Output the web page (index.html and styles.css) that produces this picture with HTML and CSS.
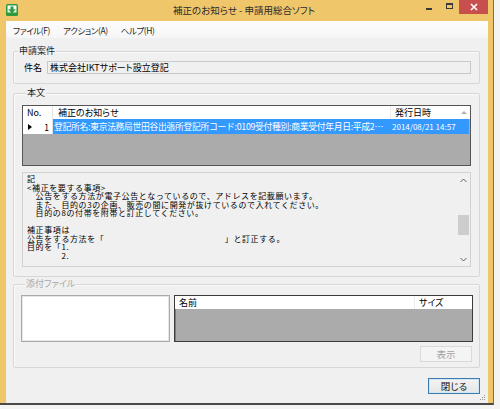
FILE: index.html
```html
<!DOCTYPE html>
<html lang="ja">
<head>
<meta charset="utf-8">
<title>補正のお知らせ</title>
<link rel="stylesheet" href="styles.css">
</head>
<body>
<div class="window">
  <div class="titlebar">
    <div class="tb-left">
      <svg class="appicon" width="12" height="12" viewBox="0 0 12 12">
        <rect x="0" y="0" width="12" height="12" rx="1.5" fill="#2f9a3c"/>
        <rect x="1.5" y="1.5" width="9" height="4" fill="#ffffff"/>
        <rect x="1.5" y="5.5" width="9" height="3" fill="#e8f4e8"/>
        <path d="M4.5 2.5 H7.5 V5.5 H9.5 L6 9.5 L2.5 5.5 H4.5 Z" fill="#2f9a3c"/>
      </svg>
    </div>
    <div class="title">補正のお知らせ - 申請用総合ソフト</div>
    <div class="controls">
      <div class="cbtn"><span class="min-glyph"></span></div>
      <div class="cbtn"><span class="max-glyph"></span></div>
      <div class="cbtn close"><svg width="8" height="8" viewBox="0 0 8 8"><path d="M1 1 L7 7 M7 1 L1 7" stroke="#fff" stroke-width="1.6"/></svg></div>
    </div>
  </div>
  <div class="client">
    <div class="menubar">
      <span class="menu m1">ファイル(F)</span>
      <span class="menu m2">アクション(A)</span>
      <span class="menu m3">ヘルプ(H)</span>
    </div>
    <div class="content">
      <div class="group g1">
        <div class="gtitle">申請案件</div>
        <div class="subject-row">
          <span class="lbl">件名</span>
          <div class="tbox">株式会社IKTサポート設立登記</div>
        </div>
      </div>

      <div class="group g2">
        <div class="gtitle">本文</div>
        <div class="grid">
          <div class="thead">
            <div class="th no">No.</div>
            <div class="th ttl">補正のお知らせ</div>
            <div class="th date">発行日時<span class="sort"></span></div>
          </div>
          <div class="trow">
            <div class="rh"><span class="arrow"></span><span class="num">1</span></div>
            <div class="sel">
              <span class="sel-text">登記所名:東京法務局世田谷出張所登記所コード:0109受付種別:商業受付年月日:平成2…</span>
              <span class="sel-date">2014/08/21 14:57</span>
            </div>
          </div>
        </div>
        <div class="memo">
          <div class="memo-text">記
&lt;補正を要する事項&gt;
　公告をする方法が電子公告となっているので、アドレスを記載願います。
　また、目的の3の企画、販売の間に開発が抜けているので入れてください。
　目的の8の付帯を附帯と訂正してください。

補正事項は
公告をする方法を「　　　　　　　　　　　　　　」と訂正する。
目的を「1.
　　　　2.</div>
          <div class="vscroll">
            <svg class="sarrow" width="7" height="5" viewBox="0 0 7 5"><path d="M0.5 4 L3.5 1 L6.5 4" fill="none" stroke="#606060" stroke-width="1"/></svg>
            <div class="strack"><div class="thumb"></div></div>
            <svg class="sarrow" width="7" height="5" viewBox="0 0 7 5"><path d="M0.5 1 L3.5 4 L6.5 1" fill="none" stroke="#606060" stroke-width="1"/></svg>
          </div>
        </div>
      </div>

      <div class="group g3">
        <div class="gtitle disabled">添付ファイル</div>
        <div class="files">
          <div class="filebox"></div>
          <div class="filelist">
            <div class="fhead">
              <div class="fh name">名前</div>
              <div class="fh size">サイズ</div>
            </div>
          </div>
        </div>
        <div class="btnrow"><div class="btn disabled-btn">表示</div></div>
      </div>

      <div class="footer"><div class="btn default-btn">閉じる</div></div>
    </div>
    <svg class="grip" width="6" height="6" viewBox="0 0 6 6">
      <rect x="4" y="0" width="1" height="1" fill="#9a9a9a"/>
      <rect x="2" y="2" width="1" height="1" fill="#9a9a9a"/>
      <rect x="4" y="2" width="1" height="1" fill="#9a9a9a"/>
      <rect x="0" y="4" width="1" height="1" fill="#9a9a9a"/>
      <rect x="2" y="4" width="1" height="1" fill="#9a9a9a"/>
      <rect x="4" y="4" width="1" height="1" fill="#9a9a9a"/>
    </svg>
  </div>
</div>
</body>
</html>
```
FILE: styles.css
```css
* { box-sizing: border-box; }
html, body { margin: 0; padding: 0; }
body {
  width: 500px;
  height: 409px;
  overflow: hidden;
  background: #f4f4f4;
  font-family: "Noto Sans CJK JP", sans-serif;
  font-size: 9px;
  color: #000;
  font-feature-settings: "palt";
}

.window {
  width: 494px;
  height: 405px;
  background: #efc66a;
  border-right: 1px solid #7d7058;
  border-bottom: 2px solid #4a4a4a;
  display: flex;
  flex-direction: column;
}

/* title bar */
.titlebar {
  height: 21px;
  flex: none;
  display: grid;
  grid-template-columns: 1fr auto 1fr;
  padding-right: 5px;
}
.tb-left { display: flex; }
.appicon { margin: 4px 0 0 6px; }
.title {
  font-size: 9.5px;
  line-height: 21px;
  color: #2b2b2b;
  white-space: nowrap;
}
.controls {
  justify-self: end;
  display: flex;
  height: 14px;
}
.cbtn {
  width: 20px;
  height: 14px;
  display: flex;
  align-items: center;
  justify-content: center;
}
.min-glyph {
  width: 6px;
  height: 2px;
  background: #3a3a3a;
  margin-top: 4px;
}
.max-glyph {
  width: 7px;
  height: 6px;
  border: 1px solid #3a3a3a;
  border-top-width: 2px;
  margin-top: -2px;
}
.cbtn.close {
  width: 29px;
  background: #c7504f;
}

/* client */
.client {
  flex: 1;
  margin: 0 5px 0 6px;
  background: #f0f0f0;
  display: flex;
  flex-direction: column;
  position: relative;
}
.menubar {
  height: 17px;
  flex: none;
  background: linear-gradient(#fdfdfd, #f6f6f6);
  display: flex;
  align-items: center;
  font-size: 8.5px;
  letter-spacing: -0.4px;
  color: #1e1e1e;
}
.menu { white-space: nowrap; }
.m1 { margin-left: 7px; }
.m2 { margin-left: 13px; }
.m3 { margin-left: 13px; }

.content {
  padding: 13px 8px 0 7px;
  display: flex;
  flex-direction: column;
}

.group {
  border: 1px solid #d7d7d7;
  border-radius: 2px;
  box-shadow: inset 1px 1px 0 #fbfbfb;
  display: flex;
  flex-direction: column;
}
.gtitle {
  align-self: flex-start;
  margin: -7px 0 0 4px;
  padding: 0 1px;
  height: 12px;
  line-height: 12px;
  background: #f0f0f0;
  color: #1e1e1e;
  white-space: nowrap;
}
.gtitle.disabled { color: #a8a8a8; }

/* group 1 */
.g1 { height: 33px; }
.subject-row {
  margin-top: 4px;
  display: flex;
  align-items: center;
  height: 13px;
  padding: 0 8px 0 10px;
}
.lbl { width: 23px; flex: none; }
.tbox {
  flex: 1;
  height: 13px;
  border: 1px solid #c9c9c9;
  background: #f0f0f0;
  padding-left: 2px;
  line-height: 11px;
  font-size: 9px;
}

/* group 2 */
.g2 {
  margin-top: 9px;
  height: 184px;
  padding: 0 8px 0 8px;
}
.grid {
  margin-top: 6px;
  height: 61px;
  border: 1px solid #555;
  background: #ababab;
  display: flex;
  flex-direction: column;
  flex: none;
}
.thead {
  height: 13px;
  background: #fff;
  display: flex;
  flex: none;
}
.th {
  line-height: 13px;
  white-space: nowrap;
  padding-left: 4px;
}
.th.no { width: 30px; border-right: 1px solid #e2e2e2; flex: none; }
.th.ttl { flex: 1; padding-left: 5px; }
.th.date {
  width: 80px;
  flex: none;
  border-left: 1px solid #ececec;
  display: flex;
  align-items: center;
}
.sort {
  margin-left: auto;
  margin-right: 3px;
  width: 0;
  height: 0;
  border-left: 3px solid transparent;
  border-right: 3px solid transparent;
  border-bottom: 3px solid #b0b0b0;
}
.trow {
  height: 15px;
  display: flex;
  flex: none;
}
.rh {
  width: 30px;
  flex: none;
  background: #fff;
  border-right: 1px solid #e2e2e2;
  display: flex;
  align-items: center;
  padding: 0 3px 0 5px;
}
.arrow {
  width: 0;
  height: 0;
  border-top: 3.5px solid transparent;
  border-bottom: 3.5px solid transparent;
  border-left: 4px solid #000;
}
.num { margin-left: auto; font-size: 8.5px; }
.sel {
  flex: 1;
  background: #3399ff;
  color: #fff;
  display: flex;
  align-items: center;
  margin-right: 1px;
  font-size: 8.8px;
  line-height: 12px;
  font-feature-settings: normal;
  white-space: nowrap;
}
.sel-text {
  width: 334px;
  flex: none;
  padding-left: 1px;
  letter-spacing: -0.3px;
}
.sel-date { margin-left: 5px; font-size: 8px; }

.memo {
  margin-top: 6px;
  height: 95px;
  border: 1px solid #d2d2d2;
  background: #f0f0f0;
  display: flex;
  flex: none;
}
.memo-text {
  flex: 1;
  padding: 2px 0 0 4px;
  white-space: pre;
  font-size: 8px;
  letter-spacing: 0.6px;
  line-height: 8.55px;
  font-feature-settings: normal;
  overflow: hidden;
}
.vscroll {
  width: 14px;
  flex: none;
  display: flex;
  flex-direction: column;
  align-items: center;
  padding: 5px 0 4px;
}
.strack {
  flex: 1;
  width: 100%;
  display: flex;
  flex-direction: column;
  align-items: center;
  padding-top: 32px;
}
.thumb {
  width: 11px;
  height: 20px;
  background: #cdcdcd;
}

/* group 3 */
.g3 {
  margin-top: 7px;
  height: 84px;
  padding: 0 6px 0 7px;
}
.files {
  margin-top: 5px;
  height: 47px;
  display: flex;
  gap: 4px;
  flex: none;
}
.filebox {
  width: 149px;
  flex: none;
  background: #fff;
  border: 1px solid #ababab;
  box-shadow: inset 0 0 0 1px #e6e6e6;
}
.filelist {
  flex: 1;
  background: #ababab;
  border: 1px solid #3c3c3c;
  box-shadow: inset 1px 1px 0 #7a7a7a;
}
.fhead {
  height: 13px;
  background: #fff;
  display: flex;
}
.fh { line-height: 13px; white-space: nowrap; }
.fh.name { flex: 1; padding-left: 4px; border-right: 1px solid #ececec; }
.fh.size { width: 57px; padding-left: 4px; }

.btnrow {
  margin-top: 4px;
  display: flex;
  justify-content: flex-end;
  padding-right: 1px;
}
.btn {
  width: 52px;
  height: 16px;
  display: flex;
  align-items: center;
  justify-content: center;
  font-size: 9.5px;
}
.disabled-btn {
  border: 1px solid #d9d9d9;
  background: #f4f4f4;
  color: #a3a3a3;
}

.footer {
  margin-top: 10px;
  display: flex;
  justify-content: flex-end;
}
.default-btn {
  border: 1px solid #3d7bad;
  background: linear-gradient(#f3f3f3, #e6e6e6);
  box-shadow: inset 0 0 0 1px #cfe6f7;
  color: #111;
}

.grip {
  position: absolute;
  right: 2px;
  bottom: 2px;
}
```
